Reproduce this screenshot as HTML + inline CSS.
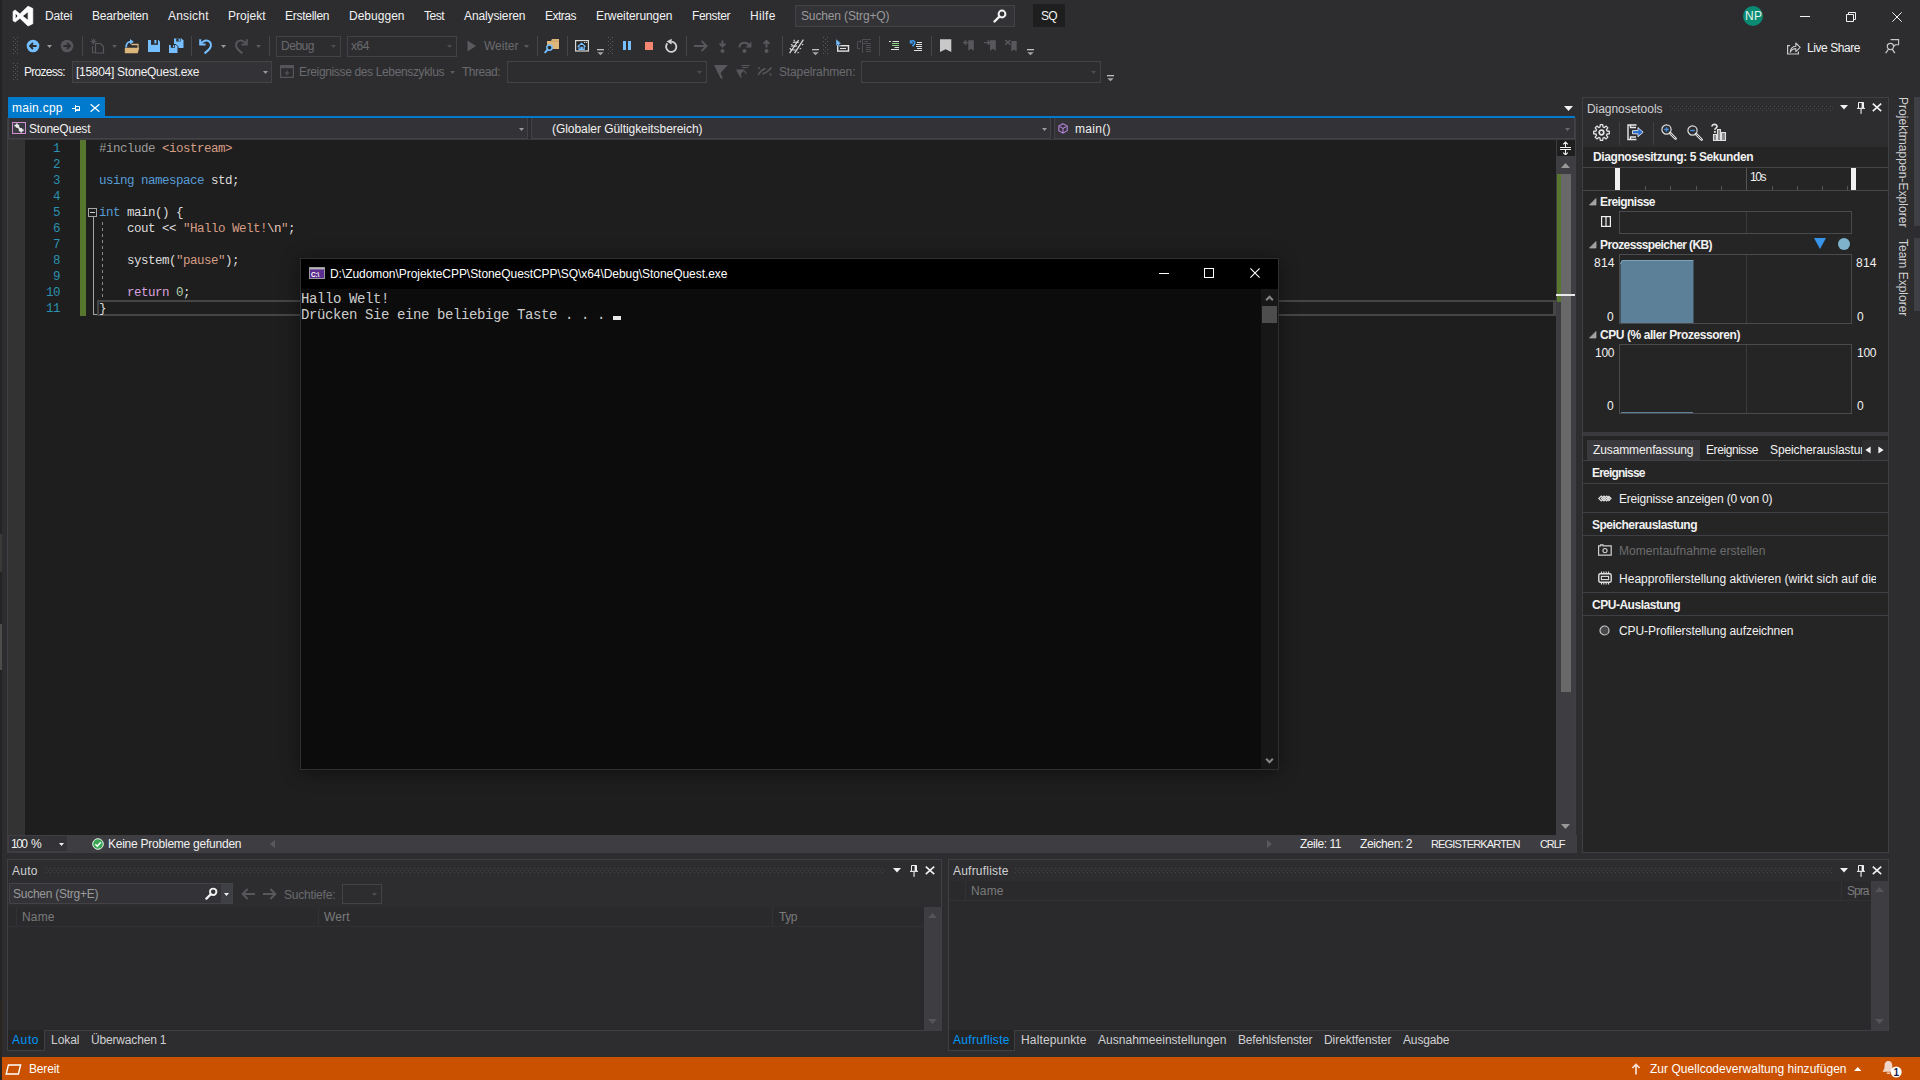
<!DOCTYPE html>
<html lang="de"><head><meta charset="utf-8"><title>SQ (Debugging) - Microsoft Visual Studio</title>
<style>
html,body{margin:0;padding:0;background:#2d2d30;}
body{width:1920px;height:1080px;position:relative;overflow:hidden;font-family:"Liberation Sans",sans-serif;}
.r{position:absolute;display:block;box-sizing:border-box;}
.t{position:absolute;white-space:pre;line-height:16px;font-family:"Liberation Sans",sans-serif;}
.m{font-family:"Liberation Mono",monospace;}
</style></head>
<body>
<div class="r" style="left:0px;top:0px;width:2px;height:1080px;background:#232325;"></div>
<div class="r" style="left:0px;top:534px;width:2px;height:38px;background:#3a3a3a;"></div>
<div class="r" style="left:0px;top:624px;width:2px;height:46px;background:#4c4c4c;"></div>
<div class="r" style="left:0px;top:1000px;width:2px;height:80px;background:#2a2420;"></div>
<svg class="r" style="left:12px;top:5px;" width="23" height="23" viewBox="0 0 23 23"><g transform="translate(1,1)"><path fill="#ffffff" stroke="#ffffff" stroke-width="0.7" stroke-linejoin="round" fill-rule="evenodd" d="M15 0.2L19.8 2.5V17.7L15 20L6.9 12.3L2.2 16L0.1 14.8V5.4L2.2 4.1L6.9 7.9ZM15.1 5.7L9.5 10L15.1 14.3ZM2.3 6.9V13.1L5 10Z"/></g></svg>
<span id="t1" class="t" style="top:7.84px;font-size:12px;color:#f1f1f1;letter-spacing:-0.13px;left:45px;">Datei</span>
<span id="t2" class="t" style="top:7.84px;font-size:12px;color:#f1f1f1;letter-spacing:-0.172px;left:92px;">Bearbeiten</span>
<span id="t3" class="t" style="top:7.84px;font-size:12px;color:#f1f1f1;letter-spacing:0.189px;left:168px;">Ansicht</span>
<span id="t4" class="t" style="top:7.84px;font-size:12px;color:#f1f1f1;letter-spacing:0.024px;left:228px;">Projekt</span>
<span id="t5" class="t" style="top:7.84px;font-size:12px;color:#f1f1f1;letter-spacing:-0.275px;left:285px;">Erstellen</span>
<span id="t6" class="t" style="top:7.84px;font-size:12px;color:#f1f1f1;letter-spacing:0.016px;left:349px;">Debuggen</span>
<span id="t7" class="t" style="top:7.84px;font-size:12px;color:#f1f1f1;letter-spacing:-0.504px;left:424px;">Test</span>
<span id="t8" class="t" style="top:7.84px;font-size:12px;color:#f1f1f1;letter-spacing:-0.121px;left:464px;">Analysieren</span>
<span id="t9" class="t" style="top:7.84px;font-size:12px;color:#f1f1f1;letter-spacing:-0.502px;left:545px;">Extras</span>
<span id="t10" class="t" style="top:7.84px;font-size:12px;color:#f1f1f1;letter-spacing:-0.074px;left:596px;">Erweiterungen</span>
<span id="t11" class="t" style="top:7.84px;font-size:12px;color:#f1f1f1;letter-spacing:-0.364px;left:692px;">Fenster</span>
<span id="t12" class="t" style="top:7.84px;font-size:12px;color:#f1f1f1;letter-spacing:0.37px;left:750px;">Hilfe</span>
<div class="r" style="left:795px;top:5px;width:220px;height:22px;background:#333337;box-shadow:inset 0 0 0 1px #434346;"></div>
<span id="t13" class="t" style="top:7.84px;font-size:12px;color:#999999;letter-spacing:-0.135px;left:801px;">Suchen (Strg+Q)</span>
<svg class="r" style="left:993px;top:9px;" width="14" height="14" viewBox="0 0 14 14"><circle cx="9" cy="5" r="3.4" fill="none" stroke="#f1f1f1" stroke-width="2"/><path d="M6.4 7.6 L1.5 12.5" stroke="#f1f1f1" stroke-width="2.4" stroke-linecap="round"/></svg>
<div class="r" style="left:1033px;top:4px;width:32px;height:23px;background:#1e1e1e;"></div>
<span id="t14" class="t" style="top:7.84px;font-size:12px;color:#f1f1f1;letter-spacing:-0.844px;left:1041px;">SQ</span>
<div class="r" style="left:1743px;top:6px;width:20px;height:20px;background:#0b8a72;border-radius:50%;"></div>
<span id="t15" class="t" style="top:7.84px;font-size:12px;color:#e4f4f0;letter-spacing:0.328px;left:1745px;">NP</span>
<div class="r" style="left:1800px;top:16px;width:10px;height:1px;background:#f1f1f1;"></div>
<svg class="r" style="left:1846px;top:12px;" width="10" height="10" viewBox="0 0 10 10"><path d="M0.5 2.5H7.5V9.5H0.5ZM2.5 2.5V0.5H9.5V7.5H7.5" fill="none" stroke="#f1f1f1" stroke-width="1"/></svg>
<svg class="r" style="left:1892px;top:12px;" width="10" height="10" viewBox="0 0 10 10"><path d="M0.3 0.3L9.7 9.7M9.7 0.3L0.3 9.7" stroke="#f1f1f1" stroke-width="1"/></svg>
<svg class="r" style="left:1786px;top:40px;" width="16" height="15" viewBox="0 0 16 15"><path d="M4 5.6H1.6V14H12.4V11.4" fill="none" stroke="#c8c8c8" stroke-width="1.2"/><path d="M4.2 12.2C4.6 8.2 6.6 6.4 9.8 6.2V3L14.2 7.4L9.8 11.6V8.6C7.4 8.6 5.6 9.6 4.2 12.2Z" fill="none" stroke="#c8c8c8" stroke-width="1.1" stroke-linejoin="round"/></svg>
<span id="t16" class="t" style="top:40.34px;font-size:12px;color:#f1f1f1;letter-spacing:-0.43px;left:1807px;">Live Share</span>
<svg class="r" style="left:1884px;top:38px;" width="16" height="16" viewBox="0 0 16 16"><path d="M6.6 1.6H14.6V6.8H11.4L10 8.2V6.8" fill="none" stroke="#c8c8c8" stroke-width="1.1"/><circle cx="6.4" cy="8.5" r="3.1" fill="#2d2d30" stroke="#c8c8c8" stroke-width="1.2"/><path d="M4.6 11.2L1.6 15.2M8.2 11.2L10.8 15.2" stroke="#c8c8c8" stroke-width="1.3"/></svg>
<svg class="r" style="left:13px;top:37px;" width="5" height="18" viewBox="0 0 5 18"><g fill="#5a5a5e"><rect x="0" y="0" width="1" height="1"/><rect x="4" y="0" width="1" height="1"/><rect x="2" y="2" width="1" height="1"/><rect x="0" y="4" width="1" height="1"/><rect x="4" y="4" width="1" height="1"/><rect x="2" y="6" width="1" height="1"/><rect x="0" y="8" width="1" height="1"/><rect x="4" y="8" width="1" height="1"/><rect x="2" y="10" width="1" height="1"/><rect x="0" y="12" width="1" height="1"/><rect x="4" y="12" width="1" height="1"/><rect x="2" y="14" width="1" height="1"/><rect x="0" y="16" width="1" height="1"/><rect x="4" y="16" width="1" height="1"/></g></svg>
<svg class="r" style="left:26px;top:39px;" width="14" height="14" viewBox="0 0 14 14"><circle cx="7" cy="7" r="6.3" fill="#75beff"/><path d="M10.6 7H4.4M7 4L4 7L7 10" fill="none" stroke="#2d2d30" stroke-width="1.8"/></svg>
<svg class="r" style="left:47.0px;top:45.0px;" width="5" height="3" viewBox="0 0 5 3"><path d="M0 0H5L2.5 3Z" fill="#999"/></svg>
<svg class="r" style="left:60px;top:39px;" width="14" height="14" viewBox="0 0 14 14"><circle cx="7" cy="7" r="6.3" fill="#55555a"/><path d="M3.4 7H9.6M7 4L10 7L7 10" fill="none" stroke="#2d2d30" stroke-width="1.8"/></svg>
<div class="r" style="left:82px;top:36px;width:1px;height:20px;background:#46464a;"></div>
<svg class="r" style="left:90px;top:38px;" width="15" height="16" viewBox="0 0 15 16"><path d="M5.5 5.5h5l3 3v6.5h-8z" fill="none" stroke="#58585c" stroke-width="1.2"/><path d="M2.5 8v6.5h2" fill="none" stroke="#58585c" stroke-width="1.1"/><path d="M3.5 0.5v6M0.5 3.5h6M1.4 1.4l4.2 4.2M5.6 1.4L1.4 5.6" stroke="#58585c" stroke-width="0.9"/></svg>
<svg class="r" style="left:112.0px;top:45.0px;" width="5" height="3" viewBox="0 0 5 3"><path d="M0 0H5L2.5 3Z" fill="#5a5a5e"/></svg>
<svg class="r" style="left:124px;top:37px;" width="16" height="17" viewBox="0 0 16 17"><path d="M7.4 6.8H14.6V11H13.4V8.2H7.4Z" fill="#dcb67a"/><path d="M0.8 10.8H15.2L13.8 16.3H0.8Z" fill="#dcb67a"/><path d="M2.2 10.6C2.2 6 3.6 4.6 7 4.6" fill="none" stroke="#75beff" stroke-width="1.7"/><path d="M6 1.9L9.8 4.8L6 7.6Z" fill="#75beff"/></svg>
<svg class="r" style="left:147px;top:39px;" width="14" height="14" viewBox="0 0 14 14"><path d="M1 1H11.6L13 2.4V13H1Z" fill="#75beff"/><rect x="4" y="1" width="7" height="4.8" fill="#2d2d30"/><rect x="7.4" y="1" width="2" height="3.4" fill="#75beff"/></svg>
<svg class="r" style="left:168px;top:38px;" width="16" height="16" viewBox="0 0 16 16"><path d="M6 0.5H13.5L15.5 2.5V10H6Z" fill="#75beff"/><rect x="8.2" y="0.5" width="4.4" height="3" fill="#2d2d30"/><rect x="10.6" y="1" width="1.3" height="2" fill="#75beff"/><path d="M0.5 6.5H8L10 8.5V15.5H0.5Z" fill="#75beff" stroke="#2d2d30" stroke-width="1"/><rect x="2.8" y="6.8" width="4.2" height="3" fill="#2d2d30"/><rect x="5" y="7.2" width="1.3" height="2" fill="#75beff"/></svg>
<div class="r" style="left:191px;top:36px;width:1px;height:20px;background:#46464a;"></div>
<svg class="r" style="left:199px;top:38px;" width="14" height="17" viewBox="0 0 14 17"><path d="M1.2 1.2V6.6H6.6" fill="none" stroke="#75beff" stroke-width="2"/><path d="M1.6 6.2C3.6 2.6 8 1.4 10.6 3.8C13.2 6.2 12 10 9 12.4L5.6 15.4" fill="none" stroke="#75beff" stroke-width="2.1"/></svg>
<svg class="r" style="left:221.0px;top:45.0px;" width="5" height="3" viewBox="0 0 5 3"><path d="M0 0H5L2.5 3Z" fill="#999"/></svg>
<svg class="r" style="left:234px;top:38px;" width="14" height="17" viewBox="0 0 14 17"><g transform="translate(14,0) scale(-1,1)"><path d="M1.2 1.2V6.6H6.6" fill="none" stroke="#55555a" stroke-width="2"/><path d="M1.6 6.2C3.6 2.6 8 1.4 10.6 3.8C13.2 6.2 12 10 9 12.4L5.6 15.4" fill="none" stroke="#55555a" stroke-width="2.1"/></g></svg>
<svg class="r" style="left:256.0px;top:45.0px;" width="5" height="3" viewBox="0 0 5 3"><path d="M0 0H5L2.5 3Z" fill="#5a5a5e"/></svg>
<div class="r" style="left:269px;top:36px;width:1px;height:20px;background:#46464a;"></div>
<div class="r" style="left:276px;top:36px;width:65px;height:21px;background:#2d2d30;box-shadow:inset 0 0 0 1px #434346;"></div>
<span id="t17" class="t" style="top:37.84px;font-size:12px;color:#6a6a6d;letter-spacing:-0.469px;left:281px;">Debug</span>
<svg class="r" style="left:331.0px;top:45.0px;" width="5" height="3" viewBox="0 0 5 3"><path d="M0 0H5L2.5 3Z" fill="#4d4d50"/></svg>
<div class="r" style="left:347px;top:36px;width:110px;height:21px;background:#2d2d30;box-shadow:inset 0 0 0 1px #434346;"></div>
<span id="t18" class="t" style="top:37.84px;font-size:12px;color:#6a6a6d;letter-spacing:-0.431px;left:351px;">x64</span>
<svg class="r" style="left:447.0px;top:45.0px;" width="5" height="3" viewBox="0 0 5 3"><path d="M0 0H5L2.5 3Z" fill="#4d4d50"/></svg>
<svg class="r" style="left:467px;top:40px;" width="10" height="12" viewBox="0 0 10 12"><path d="M0.5 0.5L9 6L0.5 11.5Z" fill="#5a5a5e"/></svg>
<span id="t19" class="t" style="top:37.84px;font-size:12px;color:#6a6a6d;letter-spacing:0.007px;left:484px;">Weiter</span>
<svg class="r" style="left:524.0px;top:45.0px;" width="5" height="3" viewBox="0 0 5 3"><path d="M0 0H5L2.5 3Z" fill="#5a5a5e"/></svg>
<div class="r" style="left:537px;top:36px;width:1px;height:20px;background:#46464a;"></div>
<svg class="r" style="left:544px;top:37px;" width="16" height="17" viewBox="0 0 16 17"><path d="M3 4H7L8 2H15V12H3Z" fill="#dcb67a"/><path d="M7.2 4.2H14.8" stroke="#c49a5c" stroke-width="0.8"/><circle cx="5.5" cy="10.6" r="2.7" fill="#2d2d30" stroke="#75beff" stroke-width="1.5"/><path d="M3.6 12.6L1.2 15.4" stroke="#75beff" stroke-width="1.9" stroke-linecap="round"/></svg>
<div class="r" style="left:567px;top:36px;width:1px;height:20px;background:#46464a;"></div>
<svg class="r" style="left:574px;top:38px;" width="16" height="15" viewBox="0 0 16 15"><rect x="1.6" y="2.6" width="12.8" height="10.4" fill="#252526" stroke="#d8d8d8" stroke-width="1.2"/><rect x="10" y="4" width="1.2" height="1" fill="#d8d8d8"/><rect x="12" y="4" width="1.2" height="1" fill="#d8d8d8"/><path d="M3.6 8.6L7.6 5.2L11.6 8.6M5 8.2V11.4H10.2V8.2M7 11.4V9.4H8.2V11.4" fill="none" stroke="#75beff" stroke-width="1.2"/></svg>
<svg class="r" style="left:597px;top:49px;" width="7" height="7" viewBox="0 0 7 7"><rect x="0" y="0" width="7" height="1.3" fill="#c0c0c0"/><path d="M0.3 3.2H6.7L3.5 6.2Z" fill="#a8a8a8"/></svg>
<svg class="r" style="left:608px;top:37px;" width="5" height="18" viewBox="0 0 5 18"><g fill="#5a5a5e"><rect x="0" y="0" width="1" height="1"/><rect x="4" y="0" width="1" height="1"/><rect x="2" y="2" width="1" height="1"/><rect x="0" y="4" width="1" height="1"/><rect x="4" y="4" width="1" height="1"/><rect x="2" y="6" width="1" height="1"/><rect x="0" y="8" width="1" height="1"/><rect x="4" y="8" width="1" height="1"/><rect x="2" y="10" width="1" height="1"/><rect x="0" y="12" width="1" height="1"/><rect x="4" y="12" width="1" height="1"/><rect x="2" y="14" width="1" height="1"/><rect x="0" y="16" width="1" height="1"/><rect x="4" y="16" width="1" height="1"/></g></svg>
<div class="r" style="left:623px;top:41px;width:3px;height:9px;background:#75beff;"></div>
<div class="r" style="left:628px;top:41px;width:3px;height:9px;background:#75beff;"></div>
<div class="r" style="left:645px;top:42px;width:8px;height:8px;background:#f48771;"></div>
<svg class="r" style="left:664px;top:38px;" width="14" height="15" viewBox="0 0 14 15"><path d="M3.4 5.4A5.1 5.1 0 1 0 7.4 3.7" fill="none" stroke="#d4d4d4" stroke-width="1.8"/><path d="M2.6 3.4L7.6 0.8V6.4Z" fill="#d4d4d4"/></svg>
<div class="r" style="left:686px;top:36px;width:1px;height:20px;background:#46464a;"></div>
<svg class="r" style="left:694px;top:40px;" width="15" height="12" viewBox="0 0 15 12"><path d="M0 6H12.6M7.6 1L12.6 6L7.6 11" fill="none" stroke="#58585c" stroke-width="1.8"/></svg>
<svg class="r" style="left:717px;top:39px;" width="11" height="14" viewBox="0 0 11 14"><path d="M5.5 1.5V7.4M2.6 4.6L5.5 7.5L8.4 4.6" fill="none" stroke="#58585c" stroke-width="1.9"/><circle cx="5.5" cy="12" r="2" fill="#58585c"/></svg>
<svg class="r" style="left:738px;top:39px;" width="14" height="14" viewBox="0 0 14 14"><path d="M1.5 8.5C1.5 3 9 2 11 6.5" fill="none" stroke="#58585c" stroke-width="2"/><path d="M13.4 2.6V8.4H7.6Z" fill="#58585c"/><circle cx="6.5" cy="12" r="2" fill="#58585c"/></svg>
<svg class="r" style="left:761px;top:39px;" width="11" height="14" viewBox="0 0 11 14"><path d="M5.5 8.4V2M2.6 4.8L5.5 1.9L8.4 4.8" fill="none" stroke="#58585c" stroke-width="1.9"/><circle cx="5.5" cy="12" r="2" fill="#58585c"/></svg>
<div class="r" style="left:782px;top:36px;width:1px;height:20px;background:#46464a;"></div>
<svg class="r" style="left:788px;top:38px;" width="17" height="16" viewBox="0 0 17 16"><g fill="none" stroke="#d8d8d8" stroke-width="1.3"><path d="M1.6 15.2L10.6 2M6.6 15.2L15.4 1.6"/><path d="M5 4.6C7 3 8.4 5.4 10.8 4M3.2 8.4C5.2 6.8 6.8 9.2 9 7.8M2.2 12C4.2 10.6 5.6 13 7.6 11.6" stroke-width="1.1"/></g><g fill="#d8d8d8"><path d="M5 2.2L6.8 1.4V3.2ZM2.6 6.6L4.4 5.8V7.6ZM1 10.6L2.8 9.8V11.6ZM15.8 6.6L14 5.8V7.6ZM13.6 10.6L11.8 9.8V11.6ZM11.4 14.6L9.6 13.8V15.6Z"/></g></svg>
<svg class="r" style="left:812px;top:49px;" width="7" height="7" viewBox="0 0 7 7"><rect x="0" y="0" width="7" height="1.3" fill="#c0c0c0"/><path d="M0.3 3.2H6.7L3.5 6.2Z" fill="#a8a8a8"/></svg>
<svg class="r" style="left:823px;top:37px;" width="5" height="18" viewBox="0 0 5 18"><g fill="#5a5a5e"><rect x="0" y="0" width="1" height="1"/><rect x="4" y="0" width="1" height="1"/><rect x="2" y="2" width="1" height="1"/><rect x="0" y="4" width="1" height="1"/><rect x="4" y="4" width="1" height="1"/><rect x="2" y="6" width="1" height="1"/><rect x="0" y="8" width="1" height="1"/><rect x="4" y="8" width="1" height="1"/><rect x="2" y="10" width="1" height="1"/><rect x="0" y="12" width="1" height="1"/><rect x="4" y="12" width="1" height="1"/><rect x="2" y="14" width="1" height="1"/><rect x="0" y="16" width="1" height="1"/><rect x="4" y="16" width="1" height="1"/></g></svg>
<svg class="r" style="left:836px;top:38px;" width="16" height="16" viewBox="0 0 16 16"><rect x="1.7" y="7.7" width="10.8" height="5.4" fill="none" stroke="#e0e0e0" stroke-width="1.4"/><path d="M4 10.5H10" stroke="#e0e0e0" stroke-width="1.1"/><path d="M0 0.8V8.2L1.7 6.6L3 9L4.4 8.2L3.2 6L5.4 5.8Z" fill="#75beff" stroke="#2d2d30" stroke-width="0.5"/></svg>
<svg class="r" style="left:857px;top:38px;" width="16" height="16" viewBox="0 0 16 16"><path d="M5.5 1V15M5.5 1.5H14M7.5 3.5H11M5.5 5.5H14M9 7.5H14M9 9.5H14M9 11.5H14M9 13.5H14M3.5 3.5H0.5V10.5H3M3.7 2V5" fill="none" stroke="#4e4e52" stroke-width="1"/></svg>
<div class="r" style="left:879px;top:36px;width:1px;height:20px;background:#46464a;"></div>
<svg class="r" style="left:888px;top:39px;" width="13" height="12" viewBox="0 0 13 12"><path d="M1 2.5H3M4.5 2.5H11M6.5 8.5H11M3 10.5H11" stroke="#e0e0e0" stroke-width="1"/><path d="M4 4.5H11M4 6.5H11" stroke="#8dd28a" stroke-width="1"/></svg>
<svg class="r" style="left:908px;top:38px;" width="16" height="14" viewBox="0 0 16 14"><path d="M9 4.5H14M8 6.5H14M8 8.5H14M9 10.5H14M6 12.5H14" stroke="#e0e0e0" stroke-width="1"/><path d="M3 3.4C5.4 1.8 7.6 3.6 6.6 5.6C6 6.8 5 7.4 4.4 8.2" fill="none" stroke="#3f9cf0" stroke-width="1.5"/><path d="M1.8 1.6V5.6H5.8Z" fill="#3f9cf0"/></svg>
<div class="r" style="left:931px;top:36px;width:1px;height:20px;background:#46464a;"></div>
<svg class="r" style="left:940px;top:39px;" width="12" height="14" viewBox="0 0 12 14"><path d="M0 0.2H11.3V13L5.6 10.2L0 13Z" fill="#c8c8c8"/></svg>
<svg class="r" style="left:962px;top:38px;" width="15" height="15" viewBox="0 0 15 15"><path d="M6.3 2.3H11.8V12.8L9 10.8L6.3 12.8Z" fill="#58585c"/><path d="M7.6 4.6H1.8M4.2 2.4L1.8 4.6L4.2 6.8" fill="none" stroke="#58585c" stroke-width="1.4"/></svg>
<svg class="r" style="left:983px;top:38px;" width="15" height="15" viewBox="0 0 15 15"><path d="M7 2.3H12.8V12.8L9.9 10.8L7 12.8Z" fill="#58585c"/><path d="M1 4.6H7M4.6 2.4L7 4.6L4.6 6.8" fill="none" stroke="#58585c" stroke-width="1.4"/></svg>
<svg class="r" style="left:1004px;top:38px;" width="15" height="15" viewBox="0 0 15 15"><path d="M7.3 3H12.7V13.5L10 11.5L7.3 13.5Z" fill="#58585c"/><path d="M1.2 2L6.4 6.6M6.4 2L1.2 6.6" fill="none" stroke="#58585c" stroke-width="1.5"/></svg>
<svg class="r" style="left:1027px;top:49px;" width="7" height="7" viewBox="0 0 7 7"><rect x="0" y="0" width="7" height="1.3" fill="#c0c0c0"/><path d="M0.3 3.2H6.7L3.5 6.2Z" fill="#a8a8a8"/></svg>
<svg class="r" style="left:13px;top:63px;" width="5" height="18" viewBox="0 0 5 18"><g fill="#5a5a5e"><rect x="0" y="0" width="1" height="1"/><rect x="4" y="0" width="1" height="1"/><rect x="2" y="2" width="1" height="1"/><rect x="0" y="4" width="1" height="1"/><rect x="4" y="4" width="1" height="1"/><rect x="2" y="6" width="1" height="1"/><rect x="0" y="8" width="1" height="1"/><rect x="4" y="8" width="1" height="1"/><rect x="2" y="10" width="1" height="1"/><rect x="0" y="12" width="1" height="1"/><rect x="4" y="12" width="1" height="1"/><rect x="2" y="14" width="1" height="1"/><rect x="0" y="16" width="1" height="1"/><rect x="4" y="16" width="1" height="1"/></g></svg>
<span id="t20" class="t" style="top:63.84px;font-size:12px;color:#f1f1f1;letter-spacing:-0.742px;left:24px;">Prozess:</span>
<div class="r" style="left:72px;top:61px;width:200px;height:22px;background:#333337;box-shadow:inset 0 0 0 1px #434346;"></div>
<span id="t21" class="t" style="top:63.84px;font-size:12px;color:#f1f1f1;letter-spacing:-0.283px;left:76px;">[15804] StoneQuest.exe</span>
<svg class="r" style="left:262.5px;top:71.0px;" width="5" height="3" viewBox="0 0 5 3"><path d="M0 0H5L2.5 3Z" fill="#999"/></svg>
<svg class="r" style="left:280px;top:65px;" width="14" height="13" viewBox="0 0 14 13"><rect x="0.6" y="0.6" width="12.8" height="11.8" fill="none" stroke="#55555a" stroke-width="1.2"/><rect x="0.6" y="0.6" width="12.8" height="2.6" fill="#55555a"/><path d="M8 4.5L4.6 8.4H7L5.8 11.6L9.6 7.4H7.2Z" fill="#55555a"/></svg>
<span id="t22" class="t" style="top:63.84px;font-size:12px;color:#6a6a6d;letter-spacing:-0.356px;left:299px;">Ereignisse des Lebenszyklus</span>
<svg class="r" style="left:450.0px;top:71.0px;" width="5" height="3" viewBox="0 0 5 3"><path d="M0 0H5L2.5 3Z" fill="#5a5a5e"/></svg>
<span id="t23" class="t" style="top:63.84px;font-size:12px;color:#6a6a6d;letter-spacing:-0.478px;left:462px;">Thread:</span>
<div class="r" style="left:507px;top:61px;width:200px;height:22px;background:#2d2d30;box-shadow:inset 0 0 0 1px #434346;"></div>
<svg class="r" style="left:697.0px;top:71.0px;" width="5" height="3" viewBox="0 0 5 3"><path d="M0 0H5L2.5 3Z" fill="#4d4d50"/></svg>
<svg class="r" style="left:714px;top:65px;" width="14" height="14" viewBox="0 0 14 14"><path d="M0 0.1H13.9L6.6 7.9L9 13.6H6.7Z" fill="#58585c"/></svg>
<svg class="r" style="left:736px;top:65px;" width="15" height="14" viewBox="0 0 15 14"><path d="M5 0.1H14L13.2 1H5.6ZM5.9 1.9H12.4L11.6 2.9H6.6ZM0 4.4H8.9L4.8 8.9L5.8 12.6H4.3Z" fill="#58585c"/><path d="M8 5.9L10.6 8.7" stroke="#58585c" stroke-width="1.1"/></svg>
<svg class="r" style="left:757px;top:66px;" width="16" height="12" viewBox="0 0 16 12"><path d="M1.2 9C3.2 6.4 4.2 2.9 8.4 2.9M5.4 7.7C9.2 7.7 11.2 5 14.4 1.5" fill="none" stroke="#58585c" stroke-width="1.7"/><path d="M2 0.8L3.1 2.2L2 3.6L0.9 2.2ZM13.6 7L14.8 8.4L13.6 9.8L12.4 8.4Z" fill="#58585c"/></svg>
<span id="t24" class="t" style="top:63.84px;font-size:12px;color:#6a6a6d;letter-spacing:-0.129px;left:779px;">Stapelrahmen:</span>
<div class="r" style="left:861px;top:61px;width:240px;height:22px;background:#2d2d30;box-shadow:inset 0 0 0 1px #434346;"></div>
<svg class="r" style="left:1091.0px;top:71.0px;" width="5" height="3" viewBox="0 0 5 3"><path d="M0 0H5L2.5 3Z" fill="#4d4d50"/></svg>
<svg class="r" style="left:1107px;top:75px;" width="7" height="7" viewBox="0 0 7 7"><rect x="0" y="0" width="7" height="1.3" fill="#c0c0c0"/><path d="M0.3 3.2H6.7L3.5 6.2Z" fill="#a8a8a8"/></svg>
<div class="r" style="left:8px;top:97px;width:97px;height:20px;background:#007acc;"></div>
<span id="t25" class="t" style="top:99.84px;font-size:12px;color:#ffffff;letter-spacing:0.258px;left:12px;">main.cpp</span>
<svg class="r" style="left:72px;top:105px;" width="9" height="8" viewBox="0 0 9 8"><path d="M0 3.5H3.5M3.5 0V7M3.5 1.5H7.5V5.5H3.5" fill="none" stroke="#ffffff" stroke-width="1"/><rect x="3.5" y="4.2" width="4.5" height="1.8" fill="#ffffff"/></svg>
<svg class="r" style="left:90px;top:104px;" width="10" height="8" viewBox="0 0 10 8"><path d="M0.6 0.3L9.4 7.7M9.4 0.3L0.6 7.7" stroke="#ffffff" stroke-width="1.3"/></svg>
<div class="r" style="left:8px;top:116px;width:1567px;height:2px;background:#007acc;"></div>
<svg class="r" style="left:1564px;top:106px;" width="9" height="5" viewBox="0 0 9 5"><path d="M0 0H9L4.5 5Z" fill="#f1f1f1"/></svg>
<div class="r" style="left:8px;top:118px;width:1567px;height:21px;background:#2d2d30;"></div>
<div class="r" style="left:8px;top:118px;width:520px;height:21px;background:#333337;border:1px solid #434346;border-top:none;"></div>
<div class="r" style="left:531px;top:118px;width:520px;height:21px;background:#333337;border:1px solid #434346;border-top:none;"></div>
<div class="r" style="left:1054px;top:118px;width:521px;height:21px;background:#333337;border:1px solid #434346;border-top:none;"></div>
<svg class="r" style="left:12px;top:122px;" width="14" height="12" viewBox="0 0 14 12"><rect x="0.5" y="0.5" width="13" height="11" fill="#3a3a42" stroke="#d08fd0" stroke-width="1"/><path d="M2.4 3.6H7.2M4.8 1.4V5.8M6.8 8.3H11.6M9.2 6.1V10.5M5.6 4.6L8.4 7.4" stroke="#e8e8e8" stroke-width="1.9"/></svg>
<span id="t26" class="t" style="top:121.14px;font-size:12px;color:#f1f1f1;letter-spacing:-0.21px;left:29px;">StoneQuest</span>
<svg class="r" style="left:519.0px;top:127.5px;" width="5" height="3" viewBox="0 0 5 3"><path d="M0 0H5L2.5 3Z" fill="#999"/></svg>
<span id="t27" class="t" style="top:121.14px;font-size:12px;color:#f1f1f1;letter-spacing:-0.056px;left:552px;">(Globaler Gültigkeitsbereich)</span>
<svg class="r" style="left:1042.0px;top:127.5px;" width="5" height="3" viewBox="0 0 5 3"><path d="M0 0H5L2.5 3Z" fill="#999"/></svg>
<svg class="r" style="left:1058px;top:122.5px;" width="10" height="11" viewBox="0 0 10 11"><path d="M5 0.7L9.2 3V7.8L5 10.2L0.8 7.8V3ZM0.8 3L5 5.4L9.2 3M5 5.4V10.2" fill="none" stroke="#b180d7" stroke-width="1.1"/></svg>
<span id="t28" class="t" style="top:121.14px;font-size:12px;color:#f1f1f1;letter-spacing:0.298px;left:1075px;">main()</span>
<svg class="r" style="left:1565.0px;top:127.5px;" width="5" height="3" viewBox="0 0 5 3"><path d="M0 0H5L2.5 3Z" fill="#6a6a6d"/></svg>
<div class="r" style="left:8px;top:139px;width:1548px;height:696px;background:#1e1e1e;"></div>
<div class="r" style="left:8px;top:139px;width:17px;height:696px;background:#333333;"></div>
<div class="r" style="left:80px;top:139px;width:6px;height:177px;background:#57772f;"></div>
<div class="r" style="left:97px;top:300px;width:1459px;height:16px;border:2px solid #464646;border-right-width:3px;"></div>
<span id="t29" class="t m" style="top:140.67px;font-size:12.5px;color:#2b91af;letter-spacing:-0.5px;right:1860px;">1</span>
<span id="t30" class="t m" style="top:140.67px;font-size:12.5px;color:#dcdcdc;letter-spacing:-0.5px;left:99px;"><span style="color:#9b9b9b">#include </span><span style="color:#d69d85">&lt;iostream&gt;</span></span>
<span id="t31" class="t m" style="top:156.67px;font-size:12.5px;color:#2b91af;letter-spacing:-0.5px;right:1860px;">2</span>
<span id="t32" class="t m" style="top:172.67px;font-size:12.5px;color:#2b91af;letter-spacing:-0.5px;right:1860px;">3</span>
<span id="t33" class="t m" style="top:172.67px;font-size:12.5px;color:#dcdcdc;letter-spacing:-0.5px;left:99px;"><span style="color:#569cd6">using namespace</span><span style="color:#dcdcdc"> std;</span></span>
<span id="t34" class="t m" style="top:188.67px;font-size:12.5px;color:#2b91af;letter-spacing:-0.5px;right:1860px;">4</span>
<span id="t35" class="t m" style="top:204.67px;font-size:12.5px;color:#2b91af;letter-spacing:-0.5px;right:1860px;">5</span>
<span id="t36" class="t m" style="top:204.67px;font-size:12.5px;color:#dcdcdc;letter-spacing:-0.5px;left:99px;"><span style="color:#569cd6">int</span><span style="color:#dcdcdc"> main() {</span></span>
<span id="t37" class="t m" style="top:220.67px;font-size:12.5px;color:#2b91af;letter-spacing:-0.5px;right:1860px;">6</span>
<span id="t38" class="t m" style="top:220.67px;font-size:12.5px;color:#dcdcdc;letter-spacing:-0.5px;left:99px;"><span style="color:#dcdcdc">    cout &lt;&lt; </span><span style="color:#d69d85">&quot;Hallo Welt!</span><span style="color:#e8c9bb">\n</span><span style="color:#d69d85">&quot;</span><span style="color:#dcdcdc">;</span></span>
<span id="t39" class="t m" style="top:236.67px;font-size:12.5px;color:#2b91af;letter-spacing:-0.5px;right:1860px;">7</span>
<span id="t40" class="t m" style="top:252.67px;font-size:12.5px;color:#2b91af;letter-spacing:-0.5px;right:1860px;">8</span>
<span id="t41" class="t m" style="top:252.67px;font-size:12.5px;color:#dcdcdc;letter-spacing:-0.5px;left:99px;"><span style="color:#dcdcdc">    system(</span><span style="color:#d69d85">&quot;pause&quot;</span><span style="color:#dcdcdc">);</span></span>
<span id="t42" class="t m" style="top:268.67px;font-size:12.5px;color:#2b91af;letter-spacing:-0.5px;right:1860px;">9</span>
<span id="t43" class="t m" style="top:284.67px;font-size:12.5px;color:#2b91af;letter-spacing:-0.5px;right:1860px;">10</span>
<span id="t44" class="t m" style="top:284.67px;font-size:12.5px;color:#dcdcdc;letter-spacing:-0.5px;left:99px;"><span style="color:#d8a0df">    return</span><span style="color:#dcdcdc"> </span><span style="color:#b5cea8">0</span><span style="color:#dcdcdc">;</span></span>
<span id="t45" class="t m" style="top:300.67px;font-size:12.5px;color:#2b91af;letter-spacing:-0.5px;right:1860px;">11</span>
<span id="t46" class="t m" style="top:300.67px;font-size:12.5px;color:#dcdcdc;letter-spacing:-0.5px;left:99px;"><span style="color:#dcdcdc">}</span></span>
<svg class="r" style="left:88px;top:208px;" width="9" height="9" viewBox="0 0 9 9"><rect x="0.5" y="0.5" width="8" height="8" fill="#1e1e1e" stroke="#a5a5a5" stroke-width="1"/><path d="M2 4.5H7" stroke="#d0d0d0" stroke-width="1"/></svg>
<div class="r" style="left:93px;top:217px;width:1px;height:98px;background:#a5a5a5;"></div>
<div class="r" style="left:93px;top:314px;width:4px;height:1px;background:#a5a5a5;"></div>
<div class="r" style="left:102px;top:220px;width:1px;height:80px;background-image:linear-gradient(transparent 2px,#8a8a8a 2px,#8a8a8a 5px,transparent 5px);background-size:1px 6px;"></div>
<div class="r" style="left:1556px;top:139px;width:19px;height:696px;background:#3e3e42;"></div>
<div class="r" style="left:8px;top:139px;width:1567px;height:1px;background:#3a3a3e;"></div>
<div class="r" style="left:1557px;top:140px;width:18px;height:16px;background:#1e1e1e;"></div>
<svg class="r" style="left:1560px;top:141px;" width="11" height="14" viewBox="0 0 11 14"><path d="M0 6.5H11M0 8.5H11M5.5 1V6M5.5 9V14M3.2 3.4L5.5 1.1L7.8 3.4M3.2 11.6L5.5 13.9L7.8 11.6" fill="none" stroke="#f1f1f1" stroke-width="1.1"/></svg>
<svg class="r" style="left:1561px;top:163px;" width="9" height="5" viewBox="0 0 9 5"><path d="M0 5H9L4.5 0Z" fill="#999"/></svg>
<svg class="r" style="left:1561px;top:824px;" width="9" height="5" viewBox="0 0 9 5"><path d="M0 0H9L4.5 5Z" fill="#999"/></svg>
<div class="r" style="left:1561px;top:174px;width:10px;height:518px;background:#686868;"></div>
<div class="r" style="left:1557px;top:174px;width:4px;height:128px;background:#57772f;"></div>
<div class="r" style="left:1556px;top:294px;width:19px;height:2px;background:#e8e8e8;"></div>
<div class="r" style="left:7px;top:835px;width:1570px;height:18px;background:#3e3e42;"></div>
<div class="r" style="left:7px;top:118px;width:1px;height:717px;background:#3f3f46;"></div>
<div class="r" style="left:1575px;top:118px;width:1px;height:717px;background:#3f3f46;"></div>
<div class="r" style="left:9px;top:836px;width:58px;height:15px;background:#333337;"></div>
<span id="t47" class="t" style="top:835.84px;font-size:12px;color:#f1f1f1;letter-spacing:-1.518px;left:11px;">100</span>
<span id="t48" class="t" style="top:835.84px;font-size:12px;color:#f1f1f1;letter-spacing:-0.678px;left:31px;">%</span>
<svg class="r" style="left:59.0px;top:843.0px;" width="5" height="3" viewBox="0 0 5 3"><path d="M0 0H5L2.5 3Z" fill="#f1f1f1"/></svg>
<svg class="r" style="left:92px;top:838px;" width="12" height="12" viewBox="0 0 12 12"><circle cx="6" cy="6" r="5.3" fill="#3aa655" stroke="#e8f5e9" stroke-width="1"/><path d="M3.3 6.2L5.3 8.2L8.8 4.2" fill="none" stroke="#ffffff" stroke-width="1.5"/></svg>
<span id="t49" class="t" style="top:835.84px;font-size:12px;color:#f1f1f1;letter-spacing:-0.24px;left:108px;">Keine Probleme gefunden</span>
<svg class="r" style="left:270px;top:840px;" width="5" height="8" viewBox="0 0 5 8"><path d="M5 0V8L0 4Z" fill="#5a5a5e"/></svg>
<svg class="r" style="left:1267px;top:840px;" width="5" height="8" viewBox="0 0 5 8"><path d="M0 0V8L5 4Z" fill="#5a5a5e"/></svg>
<span id="t50" class="t" style="top:835.84px;font-size:12px;color:#f1f1f1;letter-spacing:-0.456px;left:1300px;">Zeile: 11</span>
<span id="t51" class="t" style="top:835.84px;font-size:12px;color:#f1f1f1;letter-spacing:-0.394px;left:1360px;">Zeichen: 2</span>
<span id="t52" class="t" style="top:836.19px;font-size:11px;color:#f1f1f1;letter-spacing:-0.858px;left:1431px;">REGISTERKARTEN</span>
<span id="t53" class="t" style="top:836.19px;font-size:11px;color:#f1f1f1;letter-spacing:-1.076px;left:1540px;">CRLF</span>
<div class="r" style="left:300px;top:258px;width:979px;height:512px;background:#0c0c0c;box-shadow:0 0 0 1px #303030 inset, 0 2px 18px rgba(0,0,0,0.45);"></div>
<div class="r" style="left:301px;top:259px;width:977px;height:30px;background:#000000;"></div>
<svg class="r" style="left:309px;top:267px;" width="16" height="12" viewBox="0 0 16 12"><rect x="0" y="0" width="16" height="12" fill="#5b2d90"/><rect x="0.5" y="0.5" width="15" height="11" fill="none" stroke="#9a9a9a" stroke-width="1"/><rect x="1" y="1" width="14" height="1.4" fill="#b8b8b8"/></svg>
<span id="t54" class="t" style="top:267.35px;font-size:6.5px;color:#ffffff;letter-spacing:-0.2px;left:311px;font-weight:bold;">C:\</span>
<span id="t55" class="t" style="top:265.84px;font-size:12px;color:#ffffff;letter-spacing:-0.054px;left:330px;">D:\Zudomon\ProjekteCPP\StoneQuestCPP\SQ\x64\Debug\StoneQuest.exe</span>
<div class="r" style="left:1159px;top:273px;width:10px;height:1px;background:#ffffff;"></div>
<div class="r" style="left:1204px;top:268px;width:10px;height:10px;border:1px solid #ffffff;"></div>
<svg class="r" style="left:1250px;top:268px;" width="10" height="10" viewBox="0 0 10 10"><path d="M0.4 0.4L9.6 9.6M9.6 0.4L0.4 9.6" stroke="#ffffff" stroke-width="1.1"/></svg>
<span id="t56" class="t m" style="top:290.97px;font-size:14px;color:#cccccc;letter-spacing:-0.4px;left:301px;">Hallo Welt!</span>
<span id="t57" class="t m" style="top:306.97px;font-size:14px;color:#cccccc;letter-spacing:-0.4px;left:301px;">Drücken Sie eine beliebige Taste . . . </span>
<div class="r" style="left:613px;top:316px;width:8px;height:4px;background:#e8e8e8;"></div>
<div class="r" style="left:1261px;top:289px;width:17px;height:480px;background:#171717;"></div>
<svg class="r" style="left:1265px;top:295px;" width="9" height="6" viewBox="0 0 9 6"><path d="M1.2 5.2L4.5 1.8L7.8 5.2" fill="none" stroke="#858585" stroke-width="2.1"/></svg>
<svg class="r" style="left:1265px;top:758px;" width="9" height="6" viewBox="0 0 9 6"><path d="M1.2 0.8L4.5 4.2L7.8 0.8" fill="none" stroke="#858585" stroke-width="2.1"/></svg>
<div class="r" style="left:1262px;top:306px;width:15px;height:17px;background:#4d4d4d;"></div>
<div class="r" style="left:1582px;top:97px;width:307px;height:756px;background:#252526;box-shadow:inset 0 0 0 1px #3f3f46;"></div>
<div class="r" style="left:1583px;top:98px;width:305px;height:21px;background:#2d2d30;"></div>
<span id="t58" class="t" style="top:101.04px;font-size:12px;color:#d0d0d0;letter-spacing:-0.046px;left:1587px;">Diagnosetools</span>
<svg class="r" style="left:1670px;top:106px;" width="164" height="5" viewBox="0 0 164 5"><defs><pattern id="p59" width="4" height="4" patternUnits="userSpaceOnUse"><rect x="0" y="0" width="1" height="1" fill="#46464a"/><rect x="2" y="2" width="1" height="1" fill="#46464a"/></pattern></defs><rect width="164" height="5" fill="url(#p59)"/></svg>
<svg class="r" style="left:1840px;top:105px;" width="8" height="5" viewBox="0 0 8 5"><path d="M0 0H8L4 4.5Z" fill="#f1f1f1"/></svg>
<svg class="r" style="left:1856.5px;top:102px;" width="8" height="12" viewBox="0 0 8 12"><path d="M1.5 6V0.5H6.5V6" fill="none" stroke="#f1f1f1" stroke-width="1"/><rect x="4.6" y="0.5" width="1.9" height="5.5" fill="#f1f1f1"/><rect x="0" y="5.8" width="8" height="1.1" fill="#f1f1f1"/><rect x="3.5" y="6.8" width="1.1" height="5" fill="#f1f1f1"/></svg>
<svg class="r" style="left:1872px;top:103px;" width="10" height="9" viewBox="0 0 10 9"><path d="M0.8 0.6L9.2 8.2M9.2 0.6L0.8 8.2" stroke="#f1f1f1" stroke-width="1.6"/></svg>
<div class="r" style="left:1583px;top:119px;width:305px;height:28px;background:#2d2d30;"></div>
<svg class="r" style="left:1593px;top:124px;" width="17" height="17" viewBox="0 0 17 17"><path d="M14.01 7.02L16.30 7.26L16.30 9.74L14.01 9.98L13.44 11.35L14.89 13.14L13.14 14.89L11.35 13.44L9.98 14.01L9.74 16.30L7.26 16.30L7.02 14.01L5.65 13.44L3.86 14.89L2.11 13.14L3.56 11.35L2.99 9.98L0.70 9.74L0.70 7.26L2.99 7.02L3.56 5.65L2.11 3.86L3.86 2.11L5.65 3.56L7.02 2.99L7.26 0.70L9.74 0.70L9.98 2.99L11.35 3.56L13.14 2.11L14.89 3.86L13.44 5.65Z" fill="#2d2d30" stroke="#e4e4e4" stroke-width="1.3" stroke-linejoin="round"/><circle cx="8.5" cy="8.5" r="2.3" fill="#2d2d30" stroke="#e4e4e4" stroke-width="1.7"/></svg>
<div class="r" style="left:1619px;top:122px;width:1px;height:23px;background:#3f3f46;"></div>
<svg class="r" style="left:1627px;top:124px;" width="17" height="17" viewBox="0 0 17 17"><path d="M9.5 1H1V15.5H9.5M3.5 1V3.5H9M3.5 15.5V13H9" fill="none" stroke="#e8e8e8" stroke-width="1.4"/><path d="M5.5 6.6H11V3.6L16.2 8.2L11 12.8V9.8H5.5Z" fill="#2a6fd0" stroke="#e8e8e8" stroke-width="0.9"/></svg>
<div class="r" style="left:1653px;top:122px;width:1px;height:23px;background:#3f3f46;"></div>
<svg class="r" style="left:1661px;top:124px;" width="16" height="16" viewBox="0 0 16 16"><circle cx="5.5" cy="5.5" r="4.6" fill="#2d2d30" stroke="#e0e0e0" stroke-width="1.2"/><path d="M3.2 5.5H7.8M5.5 3.2V7.8" stroke="#4a90e2" stroke-width="1.4"/><path d="M9 9L14.6 14.6" stroke="#e0e0e0" stroke-width="2.6" stroke-linecap="round"/><path d="M9.4 9.4L14.4 14.4" stroke="#2d2d30" stroke-width="0.8"/></svg>
<svg class="r" style="left:1687px;top:125px;" width="16" height="16" viewBox="0 0 16 16"><circle cx="5.5" cy="5.5" r="4.6" fill="#2d2d30" stroke="#e0e0e0" stroke-width="1.2"/><path d="M3.2 5.5H7.8" stroke="#4a90e2" stroke-width="1.4"/><path d="M9 9L14.6 14.6" stroke="#e0e0e0" stroke-width="2.6" stroke-linecap="round"/><path d="M9.4 9.4L14.4 14.4" stroke="#2d2d30" stroke-width="0.8"/></svg>
<svg class="r" style="left:1711px;top:123px;" width="16" height="18" viewBox="0 0 16 18"><path d="M1 3.4C1 0.6 6 0.6 6 3.4C6 5 3.8 5.2 3.8 6.8" fill="none" stroke="#e0e0e0" stroke-width="1.7"/><rect x="3" y="8" width="1.8" height="1.8" fill="#e0e0e0"/><path d="M2.5 11.5H5.5V17.5H2.5ZM6.5 6.5H9.5V17.5H6.5ZM10.5 9.5H14.5V17.5H10.5Z" fill="#8a8a8a" stroke="#e0e0e0" stroke-width="1.1"/></svg>
<div class="r" style="left:1583px;top:147px;width:305px;height:21px;background:#252526;"></div>
<span id="t60" class="t" style="top:148.84px;font-size:12px;color:#f1f1f1;letter-spacing:-0.392px;left:1593px;font-weight:bold;">Diagnosesitzung: 5 Sekunden</span>
<div class="r" style="left:1583px;top:167px;width:305px;height:1px;background:#46464a;"></div>
<div class="r" style="left:1583px;top:190px;width:305px;height:1px;background:#46464a;"></div>
<div class="r" style="left:1615px;top:168px;width:5px;height:22px;background:#f1f1f1;"></div>
<div class="r" style="left:1851px;top:168px;width:5px;height:22px;background:#f1f1f1;"></div>
<div class="r" style="left:1746px;top:168px;width:1px;height:22px;background:#555558;"></div>
<div class="r" style="left:1645px;top:186px;width:1px;height:4px;background:#555558;"></div>
<div class="r" style="left:1670px;top:186px;width:1px;height:4px;background:#555558;"></div>
<div class="r" style="left:1696px;top:186px;width:1px;height:4px;background:#555558;"></div>
<div class="r" style="left:1721px;top:186px;width:1px;height:4px;background:#555558;"></div>
<div class="r" style="left:1772px;top:186px;width:1px;height:4px;background:#555558;"></div>
<div class="r" style="left:1797px;top:186px;width:1px;height:4px;background:#555558;"></div>
<div class="r" style="left:1822px;top:186px;width:1px;height:4px;background:#555558;"></div>
<div class="r" style="left:1847px;top:186px;width:1px;height:4px;background:#555558;"></div>
<span id="t61" class="t" style="top:169.14px;font-size:12px;color:#f1f1f1;letter-spacing:-1.431px;left:1750px;">10s</span>
<svg class="r" style="left:1589px;top:198px;" width="8" height="8" viewBox="0 0 8 8"><path d="M7 0.5V7H0.5Z" fill="#a0a0a0" stroke="#b0b0b0" stroke-width="0.7"/></svg>
<span id="t62" class="t" style="top:194.14px;font-size:12px;color:#f1f1f1;letter-spacing:-0.578px;left:1600px;font-weight:bold;">Ereignisse</span>
<div class="r" style="left:1619px;top:211px;width:233px;height:23px;box-shadow:inset 0 0 0 1px #4b4b4f;"></div>
<div class="r" style="left:1746px;top:212px;width:1px;height:21px;background:#3a3a3d;"></div>
<svg class="r" style="left:1601px;top:216px;" width="10" height="11" viewBox="0 0 10 11"><rect x="0.6" y="0.6" width="8.8" height="9.8" fill="none" stroke="#f1f1f1" stroke-width="1.2"/><path d="M5 0.6V10.4" stroke="#f1f1f1" stroke-width="1.2"/></svg>
<svg class="r" style="left:1589px;top:241px;" width="8" height="8" viewBox="0 0 8 8"><path d="M7 0.5V7H0.5Z" fill="#a0a0a0" stroke="#b0b0b0" stroke-width="0.7"/></svg>
<span id="t63" class="t" style="top:236.84px;font-size:12px;color:#f1f1f1;letter-spacing:-0.608px;left:1600px;font-weight:bold;">Prozessspeicher (KB)</span>
<svg class="r" style="left:1814px;top:238px;" width="12" height="11" viewBox="0 0 12 11"><path d="M0 0H12L6 11Z" fill="#3794e8"/></svg>
<div class="r" style="left:1838px;top:238px;width:12px;height:12px;background:#7fb3cc;border-radius:50%;"></div>
<div class="r" style="left:1619px;top:254px;width:233px;height:70px;box-shadow:inset 0 0 0 1px #4b4b4f;"></div>
<div class="r" style="left:1746px;top:255px;width:1px;height:68px;background:#3a3a3d;"></div>
<svg class="r" style="left:1620px;top:259px;" width="74" height="64" viewBox="0 0 74 64"><path d="M0.5 64V4L2 1.5H73.5V64Z" fill="#5b8097"/><path d="M0.5 5L2 1.5H73.5" fill="none" stroke="#7ba5bd" stroke-width="1"/></svg>
<span id="t64" class="t" style="top:254.54px;font-size:12px;color:#f1f1f1;letter-spacing:0.234px;left:1594px;">814</span>
<span id="t65" class="t" style="top:254.54px;font-size:12px;color:#f1f1f1;letter-spacing:0.234px;left:1856px;">814</span>
<span id="t66" class="t" style="top:308.54px;font-size:12px;color:#f1f1f1;letter-spacing:-0.186px;left:1607px;">0</span>
<span id="t67" class="t" style="top:308.54px;font-size:12px;color:#f1f1f1;letter-spacing:-0.176px;left:1857px;">0</span>
<svg class="r" style="left:1589px;top:331px;" width="8" height="8" viewBox="0 0 8 8"><path d="M7 0.5V7H0.5Z" fill="#a0a0a0" stroke="#b0b0b0" stroke-width="0.7"/></svg>
<span id="t68" class="t" style="top:327.14px;font-size:12px;color:#f1f1f1;letter-spacing:-0.426px;left:1600px;font-weight:bold;">CPU (% aller Prozessoren)</span>
<div class="r" style="left:1619px;top:344px;width:233px;height:70px;box-shadow:inset 0 0 0 1px #4b4b4f;"></div>
<div class="r" style="left:1746px;top:345px;width:1px;height:68px;background:#3a3a3d;"></div>
<div class="r" style="left:1621px;top:412px;width:72px;height:1px;background:#5b8097;"></div>
<span id="t69" class="t" style="top:344.54px;font-size:12px;color:#f1f1f1;letter-spacing:-0.266px;left:1595px;">100</span>
<span id="t70" class="t" style="top:344.54px;font-size:12px;color:#f1f1f1;letter-spacing:-0.266px;left:1857px;">100</span>
<span id="t71" class="t" style="top:398.34px;font-size:12px;color:#f1f1f1;letter-spacing:-0.185px;left:1607px;">0</span>
<span id="t72" class="t" style="top:398.34px;font-size:12px;color:#f1f1f1;letter-spacing:-0.189px;left:1857px;">0</span>
<div class="r" style="left:1583px;top:432px;width:305px;height:4px;background:#3a3a3e;"></div>
<div class="r" style="left:1583px;top:436px;width:305px;height:24px;background:#252526;"></div>
<div class="r" style="left:1587px;top:440px;width:113px;height:20px;background:#3a3a3e;"></div>
<span id="t73" class="t" style="top:441.64px;font-size:12px;color:#f1f1f1;letter-spacing:-0.111px;left:1593px;">Zusammenfassung</span>
<span id="t74" class="t" style="top:441.64px;font-size:12px;color:#f1f1f1;letter-spacing:-0.394px;left:1706px;">Ereignisse</span>
<span id="t75" class="t" style="top:441.64px;font-size:12px;color:#f1f1f1;letter-spacing:-0.113px;left:1770px;">Speicherauslastung</span>
<div class="r" style="left:1862px;top:440px;width:26px;height:20px;background:#2d2d30;"></div>
<svg class="r" style="left:1865px;top:446px;" width="6" height="8" viewBox="0 0 6 8"><path d="M5.6 0.4V7.6L0.4 4Z" fill="#f1f1f1"/></svg>
<svg class="r" style="left:1878px;top:446px;" width="6" height="8" viewBox="0 0 6 8"><path d="M0.4 0.4V7.6L5.6 4Z" fill="#f1f1f1"/></svg>
<div class="r" style="left:1583px;top:460px;width:305px;height:1px;background:#3f3f46;"></div>
<div class="r" style="left:1583px;top:483px;width:305px;height:1px;background:#3f3f46;"></div>
<div class="r" style="left:1583px;top:512px;width:305px;height:1px;background:#3f3f46;"></div>
<div class="r" style="left:1583px;top:535px;width:305px;height:1px;background:#3f3f46;"></div>
<div class="r" style="left:1583px;top:592px;width:305px;height:1px;background:#3f3f46;"></div>
<div class="r" style="left:1583px;top:615px;width:305px;height:1px;background:#3f3f46;"></div>
<span id="t76" class="t" style="top:464.84px;font-size:12px;color:#f1f1f1;letter-spacing:-0.801px;left:1592px;font-weight:bold;">Ereignisse</span>
<svg class="r" style="left:1598px;top:494px;" width="14" height="9" viewBox="0 0 14 9"><g fill="none" stroke="#e0e0e0" stroke-width="1.2"><path d="M0.8 4.5L3.3 2L5.8 4.5L3.3 7Z"/><path d="M3.5 4.5L6 2L8.5 4.5L6 7Z"/><path d="M6.2 4.5L8.7 2L11.2 4.5L8.7 7Z"/><path d="M8.9 4.5L10.9 2.4L13 4.5L10.9 6.6Z"/></g></svg>
<span id="t77" class="t" style="top:491.14px;font-size:12px;color:#f1f1f1;letter-spacing:-0.188px;left:1619px;">Ereignisse anzeigen (0 von 0)</span>
<span id="t78" class="t" style="top:516.84px;font-size:12px;color:#f1f1f1;letter-spacing:-0.503px;left:1592px;font-weight:bold;">Speicherauslastung</span>
<svg class="r" style="left:1598px;top:544px;" width="14" height="12" viewBox="0 0 14 12"><path d="M0.6 1.8H2.6V0.8H5V1.8H13.2V11.2H0.6Z" fill="none" stroke="#d0d0d0" stroke-width="1.2"/><circle cx="7" cy="6.6" r="2.1" fill="none" stroke="#d0d0d0" stroke-width="1.1"/></svg>
<span id="t79" class="t" style="top:542.84px;font-size:12px;color:#6d6d6d;letter-spacing:0.047px;left:1619px;">Momentaufnahme erstellen</span>
<svg class="r" style="left:1598px;top:571px;" width="14" height="14" viewBox="0 0 14 14"><rect x="0.8" y="2.8" width="12.4" height="8.4" rx="1.4" fill="none" stroke="#e0e0e0" stroke-width="1.4"/><rect x="3.4" y="5.4" width="7.2" height="3.2" fill="none" stroke="#e0e0e0" stroke-width="1.1"/><path d="M3.5 0.5V2.5M5.8 0.5V2.5M8.2 0.5V2.5M10.5 0.5V2.5M3.5 11.5V13.5M5.8 11.5V13.5M8.2 11.5V13.5M10.5 11.5V13.5" stroke="#e0e0e0" stroke-width="1.1"/></svg>
<span id="t80" class="t" style="top:571.14px;font-size:12px;color:#f1f1f1;letter-spacing:0.021px;left:1619px;">Heapprofilerstellung aktivieren (wirkt sich auf die</span>
<div class="r" style="left:1876px;top:570px;width:12px;height:20px;background:#252526;"></div>
<span id="t81" class="t" style="top:597.04px;font-size:12px;color:#f1f1f1;letter-spacing:-0.475px;left:1592px;font-weight:bold;">CPU-Auslastung</span>
<svg class="r" style="left:1599px;top:625px;" width="11" height="11" viewBox="0 0 11 11"><circle cx="5.5" cy="5.5" r="4.5" fill="#474749" stroke="#c8c8c8" stroke-width="1.2"/></svg>
<span id="t82" class="t" style="top:622.84px;font-size:12px;color:#f1f1f1;letter-spacing:-0.073px;left:1619px;">CPU-Profilerstellung aufzeichnen</span>
<div class="r" style="left:1914px;top:97px;width:6px;height:129px;background:#3f3f46;"></div>
<div class="r" style="left:1914px;top:238px;width:6px;height:73px;background:#3f3f46;"></div>
<span class="t" style="left:1911px;top:97px;color:#d0d0d0;font-size:12px;transform-origin:0 0;transform:rotate(90deg);letter-spacing:0.05px;">Projektmappen-Explorer</span>
<span class="t" style="left:1911px;top:239px;color:#d0d0d0;font-size:12px;transform-origin:0 0;transform:rotate(90deg);letter-spacing:0.0px;">Team Explorer</span>
<div class="r" style="left:7px;top:859px;width:935px;height:172px;background:#2a2a2d;box-shadow:inset 0 0 0 1px #3f3f46;"></div>
<div class="r" style="left:8px;top:860px;width:933px;height:47px;background:#2d2d30;"></div>
<span id="t85" class="t" style="top:862.84px;font-size:12px;color:#d0d0d0;letter-spacing:0.27px;left:12px;">Auto</span>
<svg class="r" style="left:46px;top:868px;" width="840" height="5" viewBox="0 0 840 5"><defs><pattern id="p86" width="4" height="4" patternUnits="userSpaceOnUse"><rect x="0" y="0" width="1" height="1" fill="#46464a"/><rect x="2" y="2" width="1" height="1" fill="#46464a"/></pattern></defs><rect width="840" height="5" fill="url(#p86)"/></svg>
<svg class="r" style="left:893.2px;top:868px;" width="8" height="5" viewBox="0 0 8 5"><path d="M0 0H8L4 4.5Z" fill="#f1f1f1"/></svg>
<svg class="r" style="left:909.5px;top:865px;" width="8" height="12" viewBox="0 0 8 12"><path d="M1.5 6V0.5H6.5V6" fill="none" stroke="#f1f1f1" stroke-width="1"/><rect x="4.6" y="0.5" width="1.9" height="5.5" fill="#f1f1f1"/><rect x="0" y="5.8" width="8" height="1.1" fill="#f1f1f1"/><rect x="3.5" y="6.8" width="1.1" height="5" fill="#f1f1f1"/></svg>
<svg class="r" style="left:925.2px;top:866px;" width="10" height="9" viewBox="0 0 10 9"><path d="M0.8 0.6L9.2 8.2M9.2 0.6L0.8 8.2" stroke="#f1f1f1" stroke-width="1.6"/></svg>
<div class="r" style="left:9px;top:883px;width:224px;height:21px;background:#333337;box-shadow:inset 0 0 0 1px #434346;"></div>
<span id="t87" class="t" style="top:886.14px;font-size:12px;color:#999999;letter-spacing:-0.254px;left:13px;">Suchen (Strg+E)</span>
<svg class="r" style="left:205px;top:887px;" width="13" height="13" viewBox="0 0 13 13"><circle cx="8.2" cy="4.8" r="3.2" fill="none" stroke="#f1f1f1" stroke-width="1.9"/><path d="M5.8 7.2L1.4 11.6" stroke="#f1f1f1" stroke-width="2.3" stroke-linecap="round"/></svg>
<div class="r" style="left:221px;top:884px;width:11px;height:19px;background:#3f3f46;"></div>
<svg class="r" style="left:223.5px;top:892.5px;" width="5" height="3" viewBox="0 0 5 3"><path d="M0 0H5L2.5 3Z" fill="#f1f1f1"/></svg>
<svg class="r" style="left:241px;top:888px;" width="14" height="12" viewBox="0 0 14 12"><path d="M14 6H1.6M6.6 1L1.6 6L6.6 11" fill="none" stroke="#58585c" stroke-width="1.9"/></svg>
<svg class="r" style="left:263px;top:888px;" width="14" height="12" viewBox="0 0 14 12"><path d="M0 6H12.4M7.4 1L12.4 6L7.4 11" fill="none" stroke="#58585c" stroke-width="1.9"/></svg>
<span id="t88" class="t" style="top:886.84px;font-size:12px;color:#6a6a6d;letter-spacing:-0.208px;left:284px;">Suchtiefe:</span>
<div class="r" style="left:342px;top:884px;width:40px;height:20px;background:#2d2d30;box-shadow:inset 0 0 0 1px #434346;"></div>
<svg class="r" style="left:372.0px;top:893.0px;" width="5" height="3" viewBox="0 0 5 3"><path d="M0 0H5L2.5 3Z" fill="#4d4d50"/></svg>
<div class="r" style="left:8px;top:907px;width:916px;height:19px;background:#2a2a2d;"></div>
<div class="r" style="left:8px;top:926px;width:916px;height:1px;background:#313135;"></div>
<div class="r" style="left:16px;top:907px;width:1px;height:19px;background:#323236;"></div>
<div class="r" style="left:318px;top:907px;width:1px;height:19px;background:#323236;"></div>
<div class="r" style="left:772px;top:907px;width:1px;height:19px;background:#323236;"></div>
<span id="t89" class="t" style="top:908.84px;font-size:12px;color:#7a7a7a;letter-spacing:0.16px;left:22px;">Name</span>
<span id="t90" class="t" style="top:908.84px;font-size:12px;color:#7a7a7a;letter-spacing:0.125px;left:324px;">Wert</span>
<span id="t91" class="t" style="top:908.84px;font-size:12px;color:#7a7a7a;letter-spacing:-0.424px;left:779px;">Typ</span>
<div class="r" style="left:924px;top:907px;width:17px;height:123px;background:#3e3e42;"></div>
<svg class="r" style="left:928px;top:913px;" width="9" height="5" viewBox="0 0 9 5"><path d="M0 5H9L4.5 0Z" fill="#555558"/></svg>
<svg class="r" style="left:928px;top:1019px;" width="9" height="5" viewBox="0 0 9 5"><path d="M0 0H9L4.5 5Z" fill="#555558"/></svg>
<div class="r" style="left:7px;top:1030px;width:38px;height:21px;background:#252526;box-shadow:inset 0 0 0 1px #3f3f46;"></div>
<div class="r" style="left:8px;top:1030px;width:36px;height:1px;background:#252526;"></div>
<span id="t92" class="t" style="top:1032.14px;font-size:12px;color:#0097fb;letter-spacing:0.604px;left:12px;">Auto</span>
<span id="t93" class="t" style="top:1032.14px;font-size:12px;color:#d0d0d0;letter-spacing:-0.047px;left:51px;">Lokal</span>
<span id="t94" class="t" style="top:1032.14px;font-size:12px;color:#d0d0d0;letter-spacing:-0.171px;left:91px;">Überwachen 1</span>
<div class="r" style="left:948px;top:859px;width:941px;height:172px;background:#2a2a2d;box-shadow:inset 0 0 0 1px #3f3f46;"></div>
<div class="r" style="left:949px;top:860px;width:939px;height:21px;background:#2d2d30;"></div>
<span id="t95" class="t" style="top:862.84px;font-size:12px;color:#d0d0d0;letter-spacing:0.213px;left:953px;">Aufrufliste</span>
<svg class="r" style="left:1015px;top:868px;" width="818" height="5" viewBox="0 0 818 5"><defs><pattern id="p96" width="4" height="4" patternUnits="userSpaceOnUse"><rect x="0" y="0" width="1" height="1" fill="#46464a"/><rect x="2" y="2" width="1" height="1" fill="#46464a"/></pattern></defs><rect width="818" height="5" fill="url(#p96)"/></svg>
<svg class="r" style="left:1840px;top:868px;" width="8" height="5" viewBox="0 0 8 5"><path d="M0 0H8L4 4.5Z" fill="#f1f1f1"/></svg>
<svg class="r" style="left:1856.5px;top:865px;" width="8" height="12" viewBox="0 0 8 12"><path d="M1.5 6V0.5H6.5V6" fill="none" stroke="#f1f1f1" stroke-width="1"/><rect x="4.6" y="0.5" width="1.9" height="5.5" fill="#f1f1f1"/><rect x="0" y="5.8" width="8" height="1.1" fill="#f1f1f1"/><rect x="3.5" y="6.8" width="1.1" height="5" fill="#f1f1f1"/></svg>
<svg class="r" style="left:1872px;top:866px;" width="10" height="9" viewBox="0 0 10 9"><path d="M0.8 0.6L9.2 8.2M9.2 0.6L0.8 8.2" stroke="#f1f1f1" stroke-width="1.6"/></svg>
<div class="r" style="left:949px;top:881px;width:922px;height:19px;background:#2a2a2d;"></div>
<div class="r" style="left:949px;top:900px;width:922px;height:1px;background:#313135;"></div>
<div class="r" style="left:965px;top:881px;width:1px;height:19px;background:#323236;"></div>
<div class="r" style="left:1841px;top:881px;width:1px;height:19px;background:#323236;"></div>
<span id="t97" class="t" style="top:882.84px;font-size:12px;color:#7a7a7a;letter-spacing:0.16px;left:971px;">Name</span>
<span id="t98" class="t" style="top:882.84px;font-size:12px;color:#7a7a7a;letter-spacing:-0.951px;left:1847px;">Spra</span>
<div class="r" style="left:1871px;top:881px;width:17px;height:149px;background:#3e3e42;"></div>
<svg class="r" style="left:1875px;top:887px;" width="9" height="5" viewBox="0 0 9 5"><path d="M0 5H9L4.5 0Z" fill="#555558"/></svg>
<svg class="r" style="left:1875px;top:1019px;" width="9" height="5" viewBox="0 0 9 5"><path d="M0 0H9L4.5 5Z" fill="#555558"/></svg>
<div class="r" style="left:948px;top:1030px;width:67px;height:21px;background:#252526;box-shadow:inset 0 0 0 1px #3f3f46;"></div>
<div class="r" style="left:949px;top:1030px;width:65px;height:1px;background:#252526;"></div>
<span id="t99" class="t" style="top:1032.14px;font-size:12px;color:#0097fb;letter-spacing:0.314px;left:953px;">Aufrufliste</span>
<span id="t100" class="t" style="top:1032.14px;font-size:12px;color:#d0d0d0;letter-spacing:0.145px;left:1021px;">Haltepunkte</span>
<span id="t101" class="t" style="top:1032.14px;font-size:12px;color:#d0d0d0;letter-spacing:0.02px;left:1098px;">Ausnahmeeinstellungen</span>
<span id="t102" class="t" style="top:1032.14px;font-size:12px;color:#d0d0d0;letter-spacing:-0.171px;left:1238px;">Befehlsfenster</span>
<span id="t103" class="t" style="top:1032.14px;font-size:12px;color:#d0d0d0;letter-spacing:-0.044px;left:1324px;">Direktfenster</span>
<span id="t104" class="t" style="top:1032.14px;font-size:12px;color:#d0d0d0;letter-spacing:-0.146px;left:1403px;">Ausgabe</span>
<div class="r" style="left:2px;top:1057px;width:1918px;height:23px;background:#ca5100;"></div>
<svg class="r" style="left:5px;top:1064px;" width="17" height="11" viewBox="0 0 17 11"><path d="M3.4 1H15.6L13.4 10H1.2Z" fill="none" stroke="#ffffff" stroke-width="1.4"/></svg>
<span id="t105" class="t" style="top:1060.84px;font-size:12px;color:#ffffff;letter-spacing:-0.171px;left:29px;">Bereit</span>
<svg class="r" style="left:1631px;top:1063px;" width="10" height="12" viewBox="0 0 10 12"><path d="M5 11.6V1.8M1.4 5L5 1.4L8.6 5" fill="none" stroke="#f6e0d4" stroke-width="1.7"/></svg>
<span id="t106" class="t" style="top:1060.84px;font-size:12px;color:#ffffff;letter-spacing:0.032px;left:1650px;">Zur Quellcodeverwaltung hinzufügen</span>
<svg class="r" style="left:1853.5px;top:1067px;" width="7.5" height="4" viewBox="0 0 7.5 4"><path d="M0 4H7.5L3.75 0Z" fill="#ffffff"/></svg>
<svg class="r" style="left:1882px;top:1060px;" width="20" height="19" viewBox="0 0 20 19"><path d="M6.4 1C3.6 1 2.6 3.2 2.6 5.6C2.6 8.6 1.8 10.4 0.4 11.8H12.4C11 10.4 10.2 8.6 10.2 5.6C10.2 3.2 9.2 1 6.4 1Z" fill="#f0d6c8"/><path d="M4.6 12.6H8.2C8.2 14.6 4.6 14.6 4.6 12.6Z" fill="#f0d6c8"/><circle cx="14.2" cy="12" r="5.5" fill="#ffffff"/></svg>
<span id="t107" class="t" style="top:1064.74px;font-size:10px;color:#1b1b4b;letter-spacing:0px;left:1893.6px;font-weight:bold;">1</span>
</body></html>
